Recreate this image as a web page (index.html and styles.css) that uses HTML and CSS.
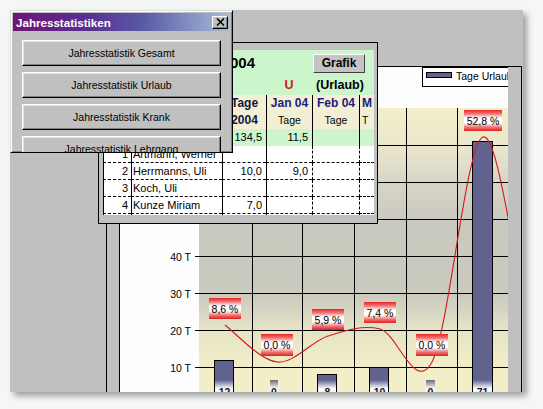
FILE: index.html
```html
<!DOCTYPE html>
<html lang="de">
<head>
<meta charset="utf-8">
<title>Jahresstatistiken</title>
<link rel="stylesheet" href="styles.css">
</head>
<body>
<div class="desktop">

  <div class="chart-win">
    <div class="side side-left"></div>
    <div class="paper">
      <svg class="chart" width="388" height="340" viewBox="120 67 388 340" shape-rendering="crispEdges">
        <defs>
          <linearGradient id="plotbg" x1="0" y1="108" x2="0" y2="392" gradientUnits="userSpaceOnUse">
            <stop offset="0" stop-color="#f3efc9"/>
            <stop offset="0.13" stop-color="#ebe7cd"/>
            <stop offset="0.26" stop-color="#d8d5c7"/>
            <stop offset="0.40" stop-color="#cac9bf"/>
            <stop offset="0.66" stop-color="#cbcabe"/>
            <stop offset="0.78" stop-color="#e6e3c6"/>
            <stop offset="0.91" stop-color="#f1eec8"/>
            <stop offset="1" stop-color="#f2efc8"/>
          </linearGradient>
          <linearGradient id="pct" x1="0" y1="0" x2="0" y2="1">
            <stop offset="0" stop-color="#e42626"/>
            <stop offset="0.18" stop-color="#f27474"/>
            <stop offset="0.38" stop-color="#ffffff"/>
            <stop offset="0.62" stop-color="#ffffff"/>
            <stop offset="0.82" stop-color="#f27474"/>
            <stop offset="1" stop-color="#de1f1f"/>
          </linearGradient>
          <linearGradient id="barlbl" x1="0" y1="0" x2="0" y2="1">
            <stop offset="0" stop-color="#62628f"/>
            <stop offset="0.55" stop-color="#ffffff"/>
            <stop offset="1" stop-color="#e4e4e4"/>
          </linearGradient>
          <linearGradient id="zerolbl" x1="0" y1="0" x2="0" y2="1">
            <stop offset="0" stop-color="#6a6a78"/>
            <stop offset="0.55" stop-color="#ffffff"/>
            <stop offset="1" stop-color="#e4e4e4"/>
          </linearGradient>
        </defs>

        <!-- legend -->
        <rect x="422.5" y="67.5" width="120" height="19" fill="#fff" stroke="#000"/>
        <rect x="426.5" y="72.5" width="25" height="5" fill="#62628f" stroke="#000"/>
        <text class="lbl" x="456" y="79.5">Tage Urlaub</text>

        <!-- plot area -->
        <rect x="199" y="108" width="309" height="296" fill="url(#plotbg)"/>

        <!-- grid + ticks -->
        <g stroke="#000" stroke-width="1">
          <line x1="195" y1="145.5" x2="508" y2="145.5"/>
          <line x1="195" y1="182.5" x2="508" y2="182.5"/>
          <line x1="195" y1="219.5" x2="508" y2="219.5"/>
          <line x1="195" y1="256.5" x2="508" y2="256.5"/>
          <line x1="195" y1="293.5" x2="508" y2="293.5"/>
          <line x1="195" y1="330.5" x2="508" y2="330.5"/>
          <line x1="195" y1="367.5" x2="508" y2="367.5"/>
          <line x1="252.5" y1="108" x2="252.5" y2="404"/>
          <line x1="302.5" y1="108" x2="302.5" y2="404"/>
          <line x1="354.5" y1="108" x2="354.5" y2="404"/>
          <line x1="406.5" y1="108" x2="406.5" y2="404"/>
          <line x1="457.5" y1="108" x2="457.5" y2="404"/>
        </g>

        <!-- y axis labels -->
        <g class="lbl" text-anchor="end">
          <text x="191" y="260.5">40 T</text>
          <text x="191" y="297.5">30 T</text>
          <text x="191" y="334.5">20 T</text>
          <text x="191" y="371.5">10 T</text>
        </g>

        <!-- bars -->
        <g fill="#62628f" stroke="#000" stroke-width="1">
          <rect x="214.5" y="360.5" width="19" height="50"/>
          <rect x="317.5" y="374.5" width="19" height="40"/>
          <rect x="369.5" y="367.5" width="19" height="40"/>
          <rect x="472.5" y="141.5" width="20" height="270"/>
        </g>

        <!-- curve -->
        <path shape-rendering="geometricPrecision" fill="none" stroke="#d01a1a" stroke-width="1.1"
          d="M225,325 C233.7,331.2 259.8,360.2 277,362 C294.2,363.8 310.8,341.5 328,336 C345.2,330.5 362.7,324.7 380,329 C397.3,333.3 414.8,394 432,362 C449.2,330 466,142.3 483,137 C500,131.7 517,297.8 534,330"/>

        <!-- percentage labels -->
        <g class="pct">
          <rect x="209" y="298" width="32" height="21" fill="url(#pct)"/>
          <text x="225" y="312.5" text-anchor="middle">8,6 %</text>
          <rect x="261" y="334" width="32" height="22" fill="url(#pct)"/>
          <text x="277" y="349" text-anchor="middle">0,0 %</text>
          <rect x="312" y="309" width="32" height="21" fill="url(#pct)"/>
          <text x="328" y="323.5" text-anchor="middle">5,9 %</text>
          <rect x="364" y="302" width="32" height="21" fill="url(#pct)"/>
          <text x="380" y="316.5" text-anchor="middle">7,4 %</text>
          <rect x="416" y="334" width="32" height="22" fill="url(#pct)"/>
          <text x="432" y="349" text-anchor="middle">0,0 %</text>
          <rect x="464" y="110" width="38" height="21" fill="url(#pct)"/>
          <text x="483" y="124.5" text-anchor="middle">52,8 %</text>
        </g>

        <!-- value labels -->
        <g>
          <rect x="215" y="380" width="18" height="16" fill="url(#barlbl)"/>
          <rect x="270" y="380" width="8" height="16" fill="url(#zerolbl)"/>
          <rect x="318" y="380" width="18" height="16" fill="url(#barlbl)"/>
          <rect x="370" y="380" width="18" height="16" fill="url(#barlbl)"/>
          <rect x="426" y="380" width="9" height="16" fill="url(#zerolbl)"/>
          <rect x="473" y="380" width="19" height="16" fill="url(#barlbl)"/>
        </g>
        <g class="val" text-anchor="middle">
          <text x="224.5" y="395.5">12</text>
          <text x="274" y="395.5">0</text>
          <text x="327.5" y="395.5">8</text>
          <text x="379.5" y="395.5">10</text>
          <text x="430.5" y="395.5">0</text>
          <text x="482.5" y="395.5">71</text>
        </g>
      </svg>
    </div>
    <div class="side side-right"></div>
  </div>

  <div class="table-win">
    <div class="sheet">
      <div class="title-area">
        <div class="title">Jahresstatistik 2004</div>
        <div class="grafik-btn">Grafik</div>
        <div class="u-mark">U</div>
        <div class="urlaub">(Urlaub)</div>
      </div>
      <div class="row hdr">
        <div class="c"></div>
        <div class="c c-left"><span class="h1 dark">Name</span><span class="h2"></span></div>
        <div class="c c-mid"><span class="h1 dark">Tage</span><span class="h2 bold dark">2004</span></div>
        <div class="c c-mid"><span class="h1">Jan 04</span><span class="h2">Tage</span></div>
        <div class="c c-mid"><span class="h1">Feb 04</span><span class="h2">Tage</span></div>
        <div class="c c-clip"><span class="h1">M</span><span class="h2">T</span></div>
      </div>
      <div class="row tot">
        <div class="c"></div>
        <div class="c"></div>
        <div class="c num">134,5</div>
        <div class="c num">11,5</div>
        <div class="c"></div>
        <div class="c"></div>
      </div>
      <div class="row data">
        <div class="c nr">1</div>
        <div class="c name">Artmann, Werner</div>
        <div class="c num"></div>
        <div class="c num"></div>
        <div class="c dash"></div>
        <div class="c dash"></div>
      </div>
      <div class="row data">
        <div class="c nr">2</div>
        <div class="c name">Herrmanns, Uli</div>
        <div class="c num">10,0</div>
        <div class="c num">9,0</div>
        <div class="c dash"></div>
        <div class="c dash"></div>
      </div>
      <div class="row data">
        <div class="c nr">3</div>
        <div class="c name">Koch, Uli</div>
        <div class="c num"></div>
        <div class="c num"></div>
        <div class="c dash"></div>
        <div class="c dash"></div>
      </div>
      <div class="row data">
        <div class="c nr">4</div>
        <div class="c name">Kunze Miriam</div>
        <div class="c num">7,0</div>
        <div class="c num"></div>
        <div class="c dash"></div>
        <div class="c dash"></div>
      </div>
      <div class="row data">
        <div class="c nr"></div>
        <div class="c name"></div>
        <div class="c num"></div>
        <div class="c num"></div>
        <div class="c dash"></div>
        <div class="c dash"></div>
      </div>
    </div>
  </div>

  <div class="dialog">
    <div class="titlebar">
      <span class="title-text">Jahresstatistiken</span>
      <span class="close-btn">
        <svg width="9" height="8" viewBox="0 0 9 8"><path d="M1,0.5 L8,7.5 M8,0.5 L1,7.5" stroke="#000" stroke-width="1.6" fill="none"/></svg>
      </span>
    </div>
    <div class="dlg-body">
      <div class="btn">Jahresstatistik Gesamt</div>
      <div class="btn">Jahresstatistik Urlaub</div>
      <div class="btn">Jahresstatistik Krank</div>
      <div class="btn">Jahresstatistik Lehrgang</div>
    </div>
  </div>

</div>
</body>
</html>
```

FILE: styles.css
```css
html, body {
  margin: 0;
  padding: 0;
  background: #f5f7f7;
  width: 543px;
  height: 409px;
  overflow: hidden;
  font-family: "Liberation Sans", Arial, sans-serif;
}

.desktop {
  position: relative;
  margin: 10px 0 0 10px;
  width: 513px;
  height: 382px;
  background: #c0c0c0;
  overflow: hidden;
  box-shadow: 4px 4px 6px rgba(0, 0, 0, 0.35);
}

/* ---------- chart window ---------- */
.chart-win {
  position: absolute;
  left: 96px;
  top: 56px;
  width: 416px;
  height: 340px;
  box-sizing: border-box;
  border: 1px solid #000;
  border-bottom: none;
  display: flex;
  background: #c0c0c0;
}
.side-left { width: 12px; flex: none; }
.side-right { flex: 1; }
.paper {
  width: 388px;
  flex: none;
  border-left: 1px solid #000;
  background: #fdfdfd;
  overflow: hidden;
}
.chart { display: block; }
.chart text {
  font-family: "Liberation Sans", Arial, sans-serif;
  font-size: 10.5px;
  fill: #000;
}
.chart .val text {
  font-weight: bold;
  font-size: 10.5px;
  fill: #14142a;
}

/* ---------- table window ---------- */
.table-win {
  position: absolute;
  left: 88px;
  top: 32px;
  width: 280px;
  height: 182px;
  box-sizing: border-box;
  border: 1px solid #000;
  background: #c0c0c0;
  padding: 7px 3px 8px 4px;
}
.sheet {
  width: 271px;
  height: 165px;
  overflow: hidden;
  font-size: 11px;
  color: #000;
}
.title-area,
.row {
  display: grid;
  grid-template-columns: 28px 91px 44px 46px 47px 15px;
}
.title-area {
  grid-template-rows: 25px 20px;
  background: #ccf5cc;
  align-items: center;
}
.title {
  grid-column: 1 / 4;
  grid-row: 1;
  text-align: right;
  padding-right: 11px;
  font-size: 15px;
  font-weight: bold;
  white-space: nowrap;
  overflow: hidden;
}
.grafik-btn {
  grid-column: 5;
  grid-row: 1;
  margin-left: 1px;
  width: 52px;
  height: 19px;
  box-sizing: border-box;
  background: #c4c4c4;
  border: 1px solid;
  border-color: #ffffff #404040 #404040 #ffffff;
  font-size: 12px;
  font-weight: bold;
  line-height: 17px;
  text-align: center;
  margin-top: 1px;
}
.u-mark {
  grid-column: 4;
  grid-row: 2;
  text-align: center;
  color: #d02020;
  font-weight: bold;
  font-size: 12.5px;
}
.urlaub {
  grid-column: 5;
  grid-row: 2;
  padding-left: 4px;
  font-weight: bold;
  font-size: 12.5px;
  white-space: nowrap;
}

.row .c {
  border-left: 1px solid #000;
  box-sizing: border-box;
  white-space: nowrap;
  overflow: hidden;
}
.hdr {
  height: 34px;
  background: #f3efd4;
}
.hdr .c {
  display: flex;
  flex-direction: column;
}
.hdr .c-mid { align-items: center; }
.hdr .c-left { padding-left: 2px; }
.hdr .c-clip { padding-left: 2px; }
.h1 {
  height: 17px;
  line-height: 17px;
  font-size: 12px;
  font-weight: bold;
  color: #1c1c80;
}
.h2 {
  height: 17px;
  line-height: 17px;
  font-size: 10.5px;
  color: #000;
}
.h2.bold { font-weight: bold; font-size: 12px; }
.dark { color: #151540; }

.tot {
  height: 17px;
  background: #ccf5cc;
  line-height: 17px;
}
.data {
  height: 17px;
  background: #fff;
  line-height: 16px;
}
.data .c { border-bottom: 1px dashed #000; }
.data .c.dash { border-left-style: dashed; }
.num { text-align: right; padding-right: 4px; }
.nr { text-align: right; padding-right: 3px; }
.name { padding-left: 1px; }

/* ---------- dialog ---------- */
.dialog {
  position: absolute;
  left: 0;
  top: 0;
  width: 223px;
  height: 143px;
  box-sizing: border-box;
  background: #c0c0c0;
  border: 1px solid;
  border-color: #dfdfdf #000 #000 #dfdfdf;
  box-shadow: inset 1px 1px #ffffff, inset -1px -1px #808080;
  padding: 2px 2px 0 2px;
  overflow: hidden;
}
.titlebar {
  height: 18px;
  display: flex;
  align-items: center;
  justify-content: space-between;
  background: linear-gradient(to right, #6e1476 0%, #573092 35%, #5a5aa4 60%, #a8bedc 100%);
  padding: 0 2px 0 3px;
}
.title-text {
  color: #fff;
  font-weight: bold;
  font-size: 11.6px;
  white-space: nowrap;
}
.close-btn {
  width: 16px;
  height: 13px;
  box-sizing: border-box;
  background: #c0c0c0;
  border: 1px solid;
  border-color: #ffffff #000 #000 #ffffff;
  box-shadow: inset -1px -1px #808080;
  display: flex;
  align-items: center;
  justify-content: center;
}
.close-btn svg { display: block; }
.dlg-body {
  display: flex;
  flex-direction: column;
  gap: 6px;
  padding: 9px 9px 0 9px;
}
.btn {
  height: 26px;
  flex: none;
  box-sizing: border-box;
  background: #c0c0c0;
  border: 1px solid;
  border-color: #ffffff #000 #000 #ffffff;
  box-shadow: inset -1px -1px #808080, inset 1px 1px #dfdfdf;
  font-size: 10.5px;
  line-height: 24px;
  text-align: center;
  color: #000;
  white-space: nowrap;
}
```
